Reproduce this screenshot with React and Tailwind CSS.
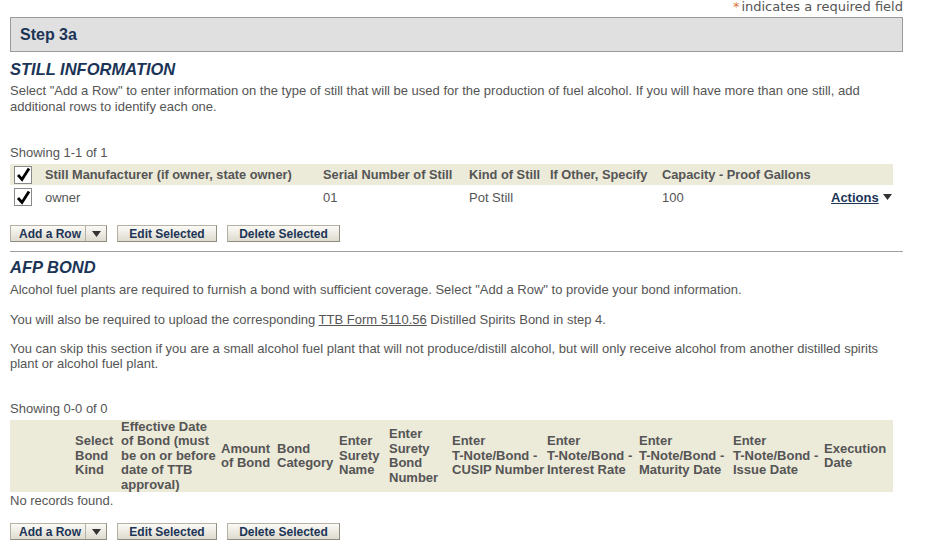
import React from 'react';

const navy = 'text-[#1c3557]';

function Check() {
  return (
    <span className="inline-flex w-[18px] h-[18px] border border-[#8a8a8a] bg-white items-center justify-center">
      <svg width="15" height="15" viewBox="0 0 15 15">
        <path d="M2 8 L6 12.5 L13 1.5" fill="none" stroke="#000" strokeWidth="2.8" />
      </svg>
    </span>
  );
}

function Caret() {
  return (
    <svg width="9" height="6" viewBox="0 0 9 6" className="inline-block">
      <path d="M0 0 H9 L4.5 6 Z" fill="#333" />
    </svg>
  );
}

function Btn({ children, className = '' }) {
  return (
    <span className={`inline-flex items-center h-[17px] border border-[#b5b2a5] border-r-[#8f8c80] border-b-[#8f8c80] bg-gradient-to-b from-[#fbfaf6] to-[#dedbcf] font-bold ${navy} text-[12px] leading-none ${className}`}>
      {children}
    </span>
  );
}

function Buttons() {
  return (
    <div className="flex items-center gap-[10px]">
      <Btn className="w-[97px]">
        <span className="pl-[8px] w-[74px]">Add a Row</span>
        <span className="h-full border-l border-[#b5b2a5] flex-1 flex items-center justify-center">
          <Caret />
        </span>
      </Btn>
      <Btn className="w-[100px] justify-center">Edit Selected</Btn>
      <Btn className="w-[113px] justify-center">Delete Selected</Btn>
    </div>
  );
}

const bondCols = [
  { w: 65, l: [] },
  { w: 46, l: ['Select', 'Bond', 'Kind'] },
  { w: 100, l: ['Effective Date', 'of Bond (must', 'be on or before', 'date of TTB', 'approval)'] },
  { w: 56, l: ['Amount', 'of Bond'] },
  { w: 62, l: ['Bond', 'Category'] },
  { w: 50, l: ['Enter', 'Surety', 'Name'] },
  { w: 63, l: ['Enter', 'Surety', 'Bond', 'Number'] },
  { w: 95, l: ['Enter', 'T-Note/Bond -', 'CUSIP Number'] },
  { w: 92, l: ['Enter', 'T-Note/Bond -', 'Interest Rate'] },
  { w: 94, l: ['Enter', 'T-Note/Bond -', 'Maturity Date'] },
  { w: 91, l: ['Enter', 'T-Note/Bond -', 'Issue Date'] },
  { w: 69, l: ['Execution', 'Date'] },
];

export default function App() {
  return (
    <div className="w-[925px] h-[548px] bg-white overflow-hidden font-['Liberation_Sans',Arial,sans-serif] text-[13px] text-[#555] leading-[15px]">
      <div className="pl-[10px] pr-[22px]">
        <div className="text-right font-['DejaVu_Sans',Verdana,sans-serif] text-[13px] leading-[14px] text-[#555]">
          <span className="text-[#d9773a] mr-[2px]">*</span>indicates a required field
        </div>
        <div className="mt-[3px] h-[35px] border border-[#9a9a9a] bg-[#e0e0e0] flex items-center pl-[9px]">
          <span className={`font-bold text-[16px] ${navy}`}>Step 3a</span>
        </div>

        <h2 className={`mt-[7px] font-bold italic text-[16.5px] leading-[20px] ${navy}`}>STILL INFORMATION</h2>
        <p className="mt-[4px] leading-[16px]">
          Select "Add a Row" to enter information on the type of still that will be used for the production of fuel alcohol. If you will have more than one still, add additional rows to identify each one.
        </p>

        <div className="mt-[30px]">Showing 1-1 of 1</div>
        <div className="mt-[4px] w-[883px]">
          <div className="flex items-center h-[21px] bg-[#ecead9] font-bold text-[12.8px]">
            <span className="w-[35px] pl-[4px] flex"><Check /></span>
            <span className="w-[278px]">Still Manufacturer (if owner, state owner)</span>
            <span className="w-[146px]">Serial Number of Still</span>
            <span className="w-[81px]">Kind of Still</span>
            <span className="w-[112px]">If Other, Specify</span>
            <span>Capacity - Proof Gallons</span>
          </div>
          <div className="flex items-center h-[24px]">
            <span className="w-[35px] pl-[4px] flex"><Check /></span>
            <span className="w-[278px]">owner</span>
            <span className="w-[146px]">01</span>
            <span className="w-[81px]">Pot Still</span>
            <span className="w-[112px]"></span>
            <span className="w-[169px]">100</span>
            <span className={`font-bold underline ${navy} flex items-center gap-[4px]`}>
              Actions <Caret />
            </span>
          </div>
        </div>

        <div className="mt-[16px]">
          <Buttons />
        </div>

        <div className="mt-[9px] border-t border-[#a0a0a0]"></div>

        <h2 className={`mt-[5px] font-bold italic text-[16.5px] leading-[20px] ${navy}`}>AFP BOND</h2>
        <p className="mt-[5px] leading-[16px]">
          Alcohol fuel plants are required to furnish a bond with sufficient coverage. Select "Add a Row" to provide your bond information.
        </p>
        <p className="mt-[14px] leading-[16px]">
          You will also be required to upload the corresponding <span className="underline">TTB Form 5110.56</span> Distilled Spirits Bond in step 4.
        </p>
        <p className="mt-[13px] leading-[15px]">
          You can skip this section if you are a small alcohol fuel plant that will not produce/distill alcohol, but will only receive alcohol from another distilled spirits plant or alcohol fuel plant.
        </p>

        <div className="mt-[30px]">Showing 0-0 of 0</div>
        <div className="mt-[4px] w-[883px] h-[72px] bg-[#ecead9] flex items-center font-bold leading-[14.5px]">
          {bondCols.map((c, i) => (
            <span key={i} style={{ width: c.w }} className="shrink-0 whitespace-nowrap">
              {c.l.map((t, j) => (
                <span key={j} className="block">{t}</span>
              ))}
            </span>
          ))}
        </div>
        <div className="mt-[1px]">No records found.</div>

        <div className="mt-[15px]">
          <Buttons />
        </div>
      </div>
    </div>
  );
}
